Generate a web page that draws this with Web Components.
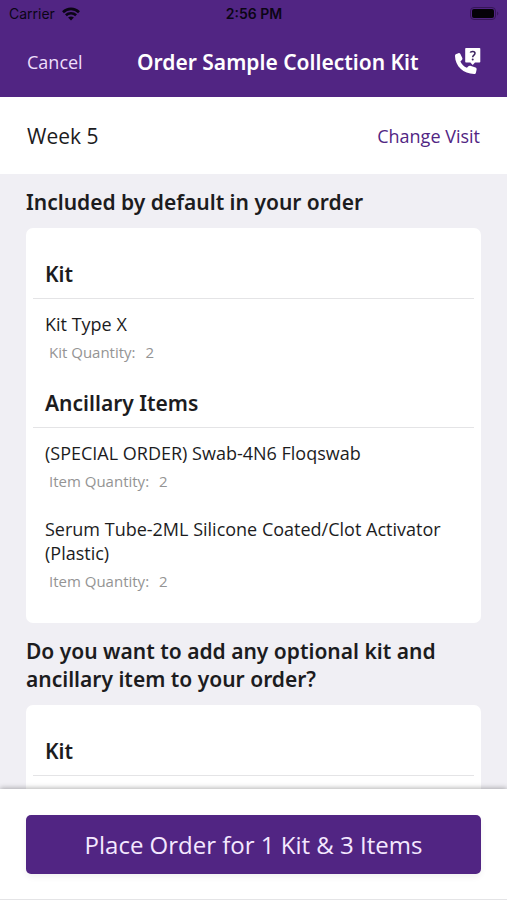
<!DOCTYPE html>
<html lang="en">
<head>
<meta charset="utf-8">
<meta name="viewport" content="width=device-width, initial-scale=1">
<title>Order Sample Collection Kit</title>
<style>
  html, body { height: 100%; margin: 0; }
  body {
    --brand: #512583;
    --surface: #ffffff;
    --page: #f0eff4;
    --ink: #1c1c1e;
    --muted: #949494;
    --rule: #e4e4e6;
    --gutter: 27px;
    --heading: 600 21px/28px "Noto Sans", "Open Sans", sans-serif;
    font-family: "Open Sans", "Noto Sans", sans-serif;
    color: var(--ink);
    background: var(--page);
  }
</style>
</head>
<body>
<order-screen>
  <status-bar slot="top" carrier="Carrier" time="2:56 PM"></status-bar>
  <nav-header slot="top">Order Sample Collection Kit</nav-header>
  <visit-bar slot="top">Week 5</visit-bar>

  <order-section heading="Included by default in your order">
    <item-group heading="Kit">
      <order-item label="Kit Quantity:" quantity="2">Kit Type X</order-item>
    </item-group>
    <item-group heading="Ancillary Items">
      <order-item label="Item Quantity:" quantity="2">(SPECIAL ORDER) Swab-4N6 Floqswab</order-item>
      <order-item label="Item Quantity:" quantity="2">Serum Tube-2ML Silicone Coated/Clot Activator (Plastic)</order-item>
    </item-group>
  </order-section>
  <order-section heading="Do you want to add any optional kit and ancillary item to your order?">
    <item-group heading="Kit"></item-group>
  </order-section>

  <order-footer slot="bottom">Place Order for 1 Kit &amp; 3 Items</order-footer>
</order-screen>

<script>
  const define = (name, render) => customElements.define(name, class extends HTMLElement {
    constructor() {
      super();
      this.attachShadow({ mode: 'open' }).innerHTML = render(this);
    }
  });

  define('order-screen', () => `
    <style>
      :host { display: flex; flex-direction: column; height: 100vh; }
      main { flex: 1; min-height: 0; overflow-y: auto; scrollbar-width: none; }
    </style>
    <header><slot name="top"></slot></header>
    <main><slot></slot></main>
    <slot name="bottom"></slot>`);

  define('status-bar', el => `
    <style>
      :host {
        display: grid; grid-template-columns: 1fr auto 1fr; align-items: center;
        box-sizing: border-box; height: 28px; padding: 0 8px 1px 9px;
        background: var(--brand); color: #0b0515;
        font: 14px/20px Inter, "Liberation Sans", sans-serif;
      }
      .carrier { display: flex; align-items: center; gap: 7px; }
      .time { font-weight: 600; }
      svg { display: block; }
      .battery { justify-self: end; }
    </style>
    <span class="carrier">${el.getAttribute('carrier')}
      <svg width="18" height="14" viewBox="0 0 18 14" fill="none" stroke="currentColor" stroke-width="2.6" aria-hidden="true">
        <path d="M1 5.2C5.5.8 12.500.8 17 5.200M3.900 8.300C6.800 5.500 11.200 5.500 14.100 8.300"/>
        <path d="M9 13.600 6.100 10.600C7.800 9.200 10.200 9.200 11.900 10.600Z" fill="currentColor" stroke="none"/>
      </svg>
    </span>
    <span class="time">${el.getAttribute('time')}</span>
    <svg class="battery" width="29" height="13" viewBox="0 0 29 13" aria-hidden="true">
      <rect x=".5" y=".5" width="25" height="12" rx="3.500" fill="none" stroke="#361658"/>
      <rect x="2" y="2" width="22" height="9" rx="2" fill="#050208"/>
      <path d="M27.200 4.500c1.500.5 1.500 3.500 0 4Z" fill="#361658"/>
    </svg>`);

  define('nav-header', () => `
    <style>
      :host {
        display: flex; align-items: center; justify-content: space-between;
        box-sizing: border-box; height: 69px; padding: 0 26px 2px var(--gutter);
        background: var(--brand); color: #fff;
      }
      h1 { margin: 0; padding-left: 20px; font: var(--heading); }
      button { border: 0; padding: 0; background: none; color: inherit; font: inherit; cursor: pointer; }
      .cancel { font-size: 18px; line-height: 24px; color: #eedffb; }
      svg { display: block; }
    </style>
    <button class="cancel" type="button">Cancel</button>
    <h1><slot></slot></h1>
    <button class="help" type="button" aria-label="Call support">
      <svg width="28" height="28" viewBox="0 0 28 28" aria-hidden="true">
        <path fill="#fff" d="M13 0h13.500a.8.8 0 0 1 .8.800v12.900a.8.8 0 0 1-.8.800H22L19.700 17l-2.300-2.500H13a.8.8 0 0 1-.8-.8V.8A.8.8 0 0 1 13 0Z"/>
        <path fill="none" stroke="#3b2360" stroke-width="1.500" d="M17.300 4.700c.4-1.700 4.700-1.900 4.700.6 0 1.900-2.300 1.700-2.300 4"/>
        <circle cx="19.700" cy="11.500" r="1" fill="#3b2360"/>
        <path fill="#fff" d="M3.300 6.100 5.400 5.200c.8-.3 1.700.1 2 .9l1.900 4c.3.700.1 1.400-.4 1.900L7.400 13.600c1.400 3.100 3.400 5 6.500 6.200l1.500-1.500c.5-.6 1.200-.7 1.900-.5l5.200 1.700c.8.300 1.300 1.200 1.100 2l-.6 2.900c-.2.900-.9 1.600-1.900 1.600C10.500 26 2.200 18.300 2 8.100c0-.9.500-1.700 1.300-2Z"/>
      </svg>
    </button>`);

  define('visit-bar', () => `
    <style>
      :host {
        display: flex; align-items: center; justify-content: space-between;
        height: 77px; padding: 0 var(--gutter);
        background: var(--surface);
        font-size: 21px; line-height: 28px;
      }
      a { color: var(--brand); font-size: 18px; text-decoration: none; }
    </style>
    <span><slot></slot></span>
    <a href="#visits">Change Visit</a>`);

  define('order-section', el => `
    <style>
      :host { display: block; padding: 14px 26px 0; }
      h2 { margin: 0 0 12px; font: var(--heading); }
      .card {
        display: flex; flex-direction: column; gap: 27px;
        padding: 32px 7px; border-radius: 7px; background: var(--surface);
      }
    </style>
    <h2>${el.getAttribute('heading')}</h2>
    <div class="card"><slot></slot></div>`);

  define('item-group', el => `
    <style>
      :host { display: block; }
      h3 {
        margin: 0; padding: 0 12px 10px; border-bottom: 1px solid var(--rule);
        font: var(--heading);
      }
      .items { display: flex; flex-direction: column; gap: 26px; padding: 0 12px; }
      ::slotted(:first-child) { margin-top: 13px; }
    </style>
    <h3>${el.getAttribute('heading')}</h3>
    <div class="items"><slot></slot></div>`);

  define('order-item', el => `
    <style>
      :host { display: flex; flex-direction: column; gap: 6px; font-size: 18px; line-height: 24px; }
      .quantity {
        display: flex; gap: 10px; padding-left: 4px;
        color: var(--muted); font-size: 15px; line-height: 20px;
      }
    </style>
    <span><slot></slot></span>
    <span class="quantity"><span>${el.getAttribute('label')}</span><span>${el.getAttribute('quantity')}</span></span>`);

  define('order-footer', () => `
    <style>
      :host {
        display: block; position: relative; padding: 26px 26px 25px;
        background: var(--surface); border-bottom: 1px solid var(--rule);
        box-shadow: 0 -1px 5px rgba(0, 0, 0, .3);
      }
      button {
        display: block; width: 100%; padding: 14px 16px 13px;
        border: 0; border-radius: 5px; background: var(--brand); color: #f4e8ff;
        font: inherit; font-size: 24px; line-height: 32px; cursor: pointer;
        box-shadow: 0 3px 6px rgba(0, 0, 0, .06);
      }
    </style>
    <button type="button"><slot></slot></button>`);
</script>
</body>
</html>
